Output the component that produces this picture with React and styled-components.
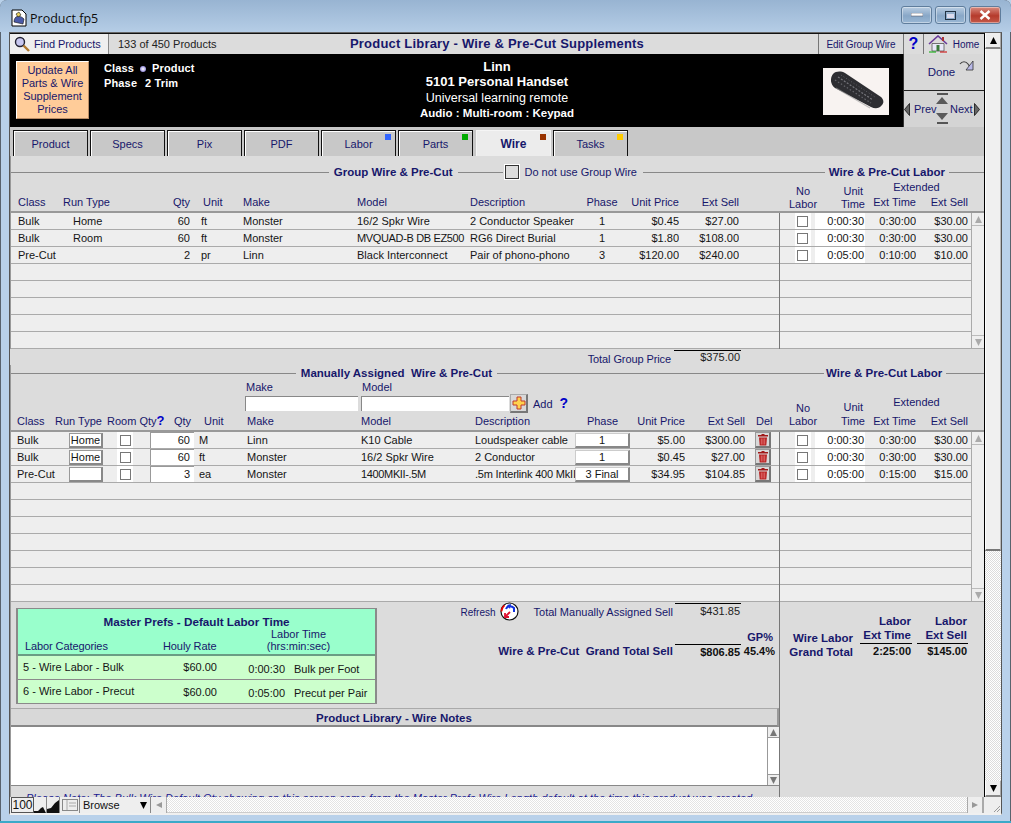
import React from 'react';
import styled, { createGlobalStyle } from 'styled-components';

const Global = createGlobalStyle`
  html, body { margin: 0; padding: 0; background: #b9d1ea; }
  * { box-sizing: border-box; }
  body { font-family: "Liberation Sans", Arial, sans-serif; font-size: 11px; }
`;

const NAVY = '#17176b';
const INK = '#151515';

const Page = styled.div`
  width: 1011px; height: 823px; overflow: hidden; display: flex; flex-direction: column;
  background: #b9d1ea; border-radius: 7px 7px 0 0; border-bottom: 2px solid #3aa9c8;
  box-shadow: inset 1px 1px 0 #59636e, inset -1px 0 0 #59636e;
`;
const TitleBar = styled.div`
  height: 32px; flex: none; display: flex; align-items: center; padding: 4px 10px 0 11px;
  background: linear-gradient(#98b4d2, #b5cde6);
`;
const TitleText = styled.span`
  margin-left: 3px; font: 12.5px "Open Sans", sans-serif; color: #0c0c0c; flex: 1;
`;
const WinButtons = styled.div` display: flex; gap: 3px; margin-top: -6px; `;
const WinBtn = styled.div`
  width: ${p => p.$w}px; height: 18px; border: 1px solid #5f7d9c; border-radius: 3px; display: flex;
  align-items: center; justify-content: center;
  background: ${p => p.$close ? 'linear-gradient(#d98c80, #b53a2c 55%, #c45a4a)' : 'linear-gradient(#b9cde2, #88a7c7 55%, #9ab7d4)'};
  box-shadow: inset 0 0 0 1px rgba(255,255,255,.4);
`;
const Client = styled.div`
  margin: 0 9px; height: 783px; flex: none; display: flex; flex-direction: column;
  border: 1px solid #555; border-bottom: 2px solid #f0f0f0; border-top-color: #666;
`;
const Upper = styled.div` height: 764px; display: flex; flex: none; `;
const Content = styled.div`
  width: 975px; flex: none; display: flex; flex-direction: column; background: #dcdcdc;
  border-right: 1px solid #000; overflow: hidden;
`;

const Toolbar = styled.div`
  height: 21px; flex: none; display: flex; background: #dcdcdc; border-top: 1px solid #111;
`;
const FindBtn = styled.div`
  width: 99px; display: flex; align-items: center; gap: 4px; padding-left: 4px; background: #efefef;
  border-right: 1px solid #888; color: ${NAVY}; letter-spacing: -.1px;
`;
const Count = styled.div`
  width: 109px; padding-left: 9px; display: flex; align-items: center; color: #222;
`;
const PageTitle = styled.div`
  flex: 1; padding-right: 42px; text-align: center; line-height: 20px; font-size: 13px; letter-spacing: .2px; font-weight: bold; color: ${NAVY};
  white-space: nowrap;
`;
const ToolBtn = styled.div`
  width: ${p => p.$w}px; display: flex; align-items: center; justify-content: center; gap: 5px; flex: none;
  border-left: 1px solid #777; font-size: 10px; letter-spacing: ${p => p.$tight ? '-.15px' : '0'}; color: ${NAVY};
`;
const ToolEnd = styled.div` width: 1px; flex: none; background: #dcdcdc; `;

const HeaderBand = styled.div` height: 73px; flex: none; display: flex; background: #000; `;
const HeaderMain = styled.div` width: 893px; display: grid; grid-template-columns: 250px 474px 169px; `;
const HeaderLeft = styled.div` display: flex; padding: 7px 0 0 6px; gap: 15px; `;
const UpdateBtn = styled.div`
  width: 73px; height: 58px; display: flex; align-items: center; justify-content: center; text-align: center;
  background: #ffcc99; border: 1px solid #fff; border-right-color: #b98c66; border-bottom-color: #b98c66;
  color: ${NAVY}; line-height: 13px;
`;
const MetaGrid = styled.div`
  display: grid; grid-template-columns: 36px 12px auto; grid-auto-rows: 15px; align-content: start; color: #fff; font-weight: bold;
  font-size: 11px; line-height: 15px; letter-spacing: .15px;
`;
const MetaBullet = styled.span`
  width: 6px; height: 6px; border-radius: 50%; background: radial-gradient(#fff, #6a5fd0); align-self: center;
`;
const MetaPhase = styled.span` margin-left: -7px; `;
const HeaderCenter = styled.div`
  padding-top: 6px; text-align: center; color: #fff;
`;
const HeadLine = styled.div`
  height: ${p => p.$h}px; line-height: ${p => p.$h}px; font-weight: ${p => p.$bold ? 'bold' : 'normal'}; font-size: ${p => p.$size}px;
`;
const PhotoCell = styled.div` padding: 14px 0 0 89px; `;
const Photo = styled.svg` display: block; `;
const NavCol = styled.div` width: 81px; flex: none; display: flex; flex-direction: column; background: #d4d4d4; border-left: 1px solid #333; `;
const DoneBtn = styled.div`
  height: 37px; display: flex; align-items: center; justify-content: center; gap: 4px; padding-left: 14px; color: ${NAVY}; font-size: 11.5px;
  border-bottom: 1px solid #222; background: #d8d8d8;
`;
const DoneGlyph = styled.svg` margin-top: -12px; `;
const PrevNext = styled.div` height: 36px; display: flex; align-items: center; color: ${NAVY}; white-space: nowrap; `;
const PrevLabel = styled.span` margin-left: 4px; width: 20px; `;
const NextLabel = styled.span` width: 22px; margin-right: 2px; `;
const UpDown = styled.div` width: 16px; height: 34px; display: flex; flex-direction: column; justify-content: space-between; align-items: center; padding: 1px 0 2px; `;
const ArrowBar = styled.i` display: block; width: 11px; height: 2px; background: #555; `;
const ArrowGroup = styled.div` display: flex; flex-direction: column; align-items: center; gap: 2px; `;

const TabStrip = styled.div`
  height: 29px; flex: none; display: flex; gap: 2px; padding: 3px 0 0 3px; background: #c8c8c8;
`;
const Tab = styled.div`
  position: relative; width: 75px; height: 26px; text-align: center; line-height: 27px; color: ${NAVY};
  background: ${p => p.$active ? '#ececec' : '#c8c8c8'}; font-weight: ${p => p.$active ? 'bold' : 'normal'};
  font-size: ${p => p.$active ? 12 : 11}px; margin-left: ${p => p.$active ? 1 : 0}px;
  border: 1px solid ${p => p.$active ? '#f5f5f5' : '#111'}; border-bottom: 0;
  box-shadow: ${p => p.$active ? 'none' : 'inset 1px 1px 0 #fff'};
`;
const TabDot = styled.i`
  position: absolute; top: 3px; right: 4px; width: 6px; height: 6px; background: ${p => p.$c};
`;

const Section = styled.div`
  display: grid; grid-template-columns: 769px 204px; flex: none; padding-left: 1px; box-shadow: inset 1px 0 0 #999;
`;
const LeftCol = styled.div` min-width: 0; `;
const RightCol = styled.div` min-width: 0; `;
const HeadBlock = styled.div`
  height: ${p => p.$h}px; padding-top: ${p => p.$top}px; border-bottom: 2px solid #999; display: flex; flex-direction: column;
`;
const HeadingRow = styled.div`
  height: 16px; flex: none; display: flex; align-items: center; color: ${NAVY}; white-space: nowrap;
`;
const Rule = styled.div`
  height: 1px; background: #888; flex: ${p => p.$w ? `0 0 ${p.$w}px` : 1}; margin-left: ${p => p.$ml || 0}px;
`;
const Heading = styled.span`
  font-weight: bold; font-size: 11.5px; padding: 0 ${p => p.$pad ?? 5}px; color: ${NAVY};
`;
const CheckWrap = styled.div`
  width: 14px; height: 14px; flex: none; border: 1px solid #333; box-shadow: 0 0 0 1px #fff; margin: 0 6px 0 2px; background: #dcdcdc;
`;
const ColHead = styled.div`
  display: grid; grid-template-columns: ${p => p.$cols}; padding-left: ${p => p.$pl}px; height: ${p => p.$h}px; align-items: end;
  padding-bottom: ${p => p.$pb}px; color: ${NAVY}; line-height: 13px;
`;
const HCell = styled.div`
  padding-left: ${p => p.$pl || 0}px; white-space: nowrap; display: flex;
  justify-content: ${p => p.$a === 'right' ? 'flex-end' : p.$a === 'center' ? 'center' : 'flex-start'};
`;
const Rows = styled.div` border-right: ${p => p.$line ? '1px solid #777' : '0'}; `;
const Row = styled.div`
  height: 17px; display: grid; grid-template-columns: ${p => p.$cols}; padding-left: ${p => p.$pl}px; align-items: center;
  background: #eeeeee; border-bottom: 1px solid #aaa; color: ${INK}; white-space: nowrap;
`;
const Cell = styled.div`
  text-align: ${p => p.$a || 'left'}; padding-left: ${p => p.$pl || 0}px; overflow: hidden;
  letter-spacing: ${p => p.$sp || 0}px;
`;
const WhiteCell = styled.div`
  height: 16px; background: #fff; line-height: 16px; padding-right: 1px; display: flex; align-items: center;
  justify-content: ${p => p.$center ? 'center' : 'flex-end'};
`;
const RoomCell = styled(WhiteCell)` width: 16px; margin-left: 13px; padding-right: 0; `;
const Box = styled.div` width: 11px; height: 11px; border: 1px solid #777; background: #fff; `;
const QtyInput = styled.div`
  height: 16px; background: #fff; border-left: 1px solid #999; border-top: 1px solid #999; text-align: right; padding-right: 4px; line-height: 14px;
`;
const RunBtn = styled.div`
  height: 15px; width: 34px; background: #fff; border: 1px solid #999; border-right: 2px solid #888; border-bottom: 2px solid #888; text-align: center; line-height: 12px;
`;
const PhaseBtn = styled.div`
  height: 15px; width: 55px; background: #fff; border: 1px solid #ccc; border-right: 2px solid #888; border-bottom: 2px solid #888; text-align: center; line-height: 12px;
`;
const DelBtn = styled.div`
  width: 16px; height: 16px; background: #d8d8d8; border: 1px solid #999; border-right: 2px solid #777; border-bottom: 2px solid #777;
  display: flex; align-items: center; justify-content: center;
`;
const LaborWrap = styled.div` display: flex; `;
const LaborRows = styled.div` width: 191px; flex: none; `;
const VScrollMini = styled.div`
  width: 13px; flex: none; background: #eee; border-left: 1px solid #aaa; display: flex; flex-direction: column; justify-content: space-between;
  border-bottom: 1px solid #aaa;
`;
const MiniBtn = styled.div`
  height: 13px; display: flex; align-items: center; justify-content: center; border-${p => p.$side}: 1px solid #bbb;
`;
const TotalRow = styled.div`
  height: 16px; flex: none; display: flex; justify-content: flex-end; padding-right: 243px; color: ${NAVY};
`;
const TotalLabel = styled.div` padding-top: 4px; line-height: 13px; margin-right: 3px; letter-spacing: -.1px; `;
const TotalValue = styled.div`
  width: 67px; height: 14px; margin-top: 1px; border-top: 1px solid #000; text-align: right; padding-right: 1px; line-height: 13px; color: #222;
`;
const LaborHead = styled.div`
  height: ${p => p.$h}px; display: grid; grid-template-columns: 46px 39px 103px; align-items: end; color: ${NAVY}; line-height: 13px; text-align: center;
`;
const NoLabor = styled.div` padding-bottom: ${p => p.$pb}px; `;
const UnitTime = styled.div` text-align: right; padding-bottom: ${p => p.$pb}px; white-space: nowrap; `;
const UnitWord = styled.div` padding-right: 2px; margin-bottom: ${p => p.$mb || 0}px; `;
const Extended = styled.div` padding-bottom: ${p => p.$pb}px; `;
const ExtTitle = styled.div` margin-bottom: ${p => p.$mb}px; `;
const ExtCols = styled.div` display: grid; grid-template-columns: 51px 52px; text-align: right; `;
const FilterRow = styled.div` height: 33px; flex: none; display: flex; align-items: flex-start; padding-left: 234px; color: ${NAVY}; line-height: 13px; `;
const FilterField = styled.div` width: ${p => p.$w}px; margin-right: ${p => p.$mr}px; flex: none; `;
const FilterLabel = styled.div` padding-left: 1px; height: 15px; `;
const FilterInput = styled.div`
  height: 15px; background: #fff; border-left: 1px solid #888; border-top: 1px solid #888;
`;
const AddBtn = styled.div`
  width: 18px; height: 19px; margin-top: 13px; background: #d8d8d8; border: 1px solid #aaa; border-right: 2px solid #777; border-bottom: 2px solid #777;
  display: flex; align-items: center; justify-content: center; flex: none;
`;
const AddLabel = styled.div` margin: 17px 7px 0 5px; `;
const Q = styled.span`
  font: bold ${p => p.$s || 14}px/12px "Liberation Sans", sans-serif; color: #0000c8; margin-top: ${p => p.$mt || 0}px;
`;

const Bottom = styled.div` height: 195px; flex: none; display: grid; grid-template-columns: 769px 204px; padding-left: 1px; box-shadow: inset 1px 0 0 #999; `;
const BottomLeft = styled.div` border-right: 1px solid #777; display: flex; flex-direction: column; min-width: 0; `;
const SummaryArea = styled.div` height: 106px; flex: none; display: flex; padding: 6px 0 0 5px; `;
const Master = styled.div`
  width: 361px; height: 96px; flex: none; border: 2px solid #8a8a8a; border-width: 1px 2px 1px 2px; background: #ccffcc; color: ${INK};
`;
const MasterHead = styled.div` height: 47px; background: #99ffcc; border-bottom: 2px solid #6a9d84; color: ${NAVY}; `;
const MasterTitle = styled.div` text-align: center; font-weight: bold; font-size: 11.7px; height: 19px; line-height: 25px; `;
const MasterCols = styled.div` display: grid; grid-template-columns: 145px 52px 1fr; align-items: end; line-height: 12px; `;
const MasterCat = styled.div` padding-left: 7px; letter-spacing: -.1px; `;
const MasterRateHead = styled.div` text-align: right; white-space: nowrap; letter-spacing: -.1px; `;
const MasterTimeHead = styled.div` text-align: center; padding-left: 7px; `;
const MasterRow = styled.div`
  height: 24px; display: grid; grid-template-columns: 147px 52px 68px 1fr; align-items: center; border-bottom: 1px solid #8a8a8a; white-space: nowrap;
  &:last-child { border-bottom: 0; }
`;
const MName = styled.div` padding: 0 0 2px 5px; `;
const MRate = styled.div` text-align: right; padding-bottom: 1px; `;
const MTime = styled.div` text-align: right; padding-top: 2px; `;
const MDesc = styled.div` padding: 2px 0 0 9px; `;
const Summary = styled.div`
  width: 402px; flex: none; margin-top: -5px; display: grid; grid-template-columns: 1fr 66px 38px; grid-template-rows: 27px 14px 20px;
  align-content: start; color: ${NAVY};
`;
const SumLabel = styled.div`
  display: flex; justify-content: flex-end; align-items: flex-start; padding: ${p => p.$pt}px 2px 0 0; font-weight: ${p => p.$bold ? 'bold' : 'normal'};
  font-size: ${p => p.$bold ? 11.5 : 11}px; line-height: 13px; white-space: nowrap;
`;
const RefreshText = styled.span` font-size: 10px; margin-right: 4px; `;
const RefreshIcon = styled.svg` margin: -4px 15px 0 0; flex: none; `;
const SumValue = styled.div`
  border-top: ${p => p.$line ? '1px solid #000' : '0'}; text-align: right; padding: 1px 1px 0 0; line-height: 13px;
  font-weight: ${p => p.$bold ? 'bold' : 'normal'}; color: ${p => p.$bold ? '#111' : '#222'};
`;
const GpCell = styled.div`
  text-align: right; padding-right: ${p => p.$pr}px; padding-top: 1px; line-height: 13px; font-weight: bold; color: ${p => p.$c};
`;
const NotesTitle = styled.div`
  height: 19px; flex: none; text-align: center; line-height: 18px; font-weight: bold; font-size: 11.5px; color: ${NAVY}; background: #d8d8d8;
  border-top: 1px solid #aaa; border-bottom: 2px solid #888; border-right: 2px solid #999;
`;
const NotesBody = styled.div` height: 59px; flex: none; background: #fff; border-bottom: 1px solid #888; display: flex; justify-content: flex-end; `;
const NotesBar = styled.div`
  width: 12px; background: #fff; border-left: 1px solid #999; display: flex; flex-direction: column; justify-content: space-between;
`;
const NotesBtn = styled.div`
  height: 11px; background: #eee; display: flex; align-items: center; justify-content: center; border-${p => p.$side}: 1px solid #999;
`;
const Clip = styled.div`
  height: 11px; flex: none; overflow: hidden; padding: 6px 0 0 15px; line-height: 13px; font-style: italic; color: #1a1a90; white-space: nowrap; letter-spacing: .03px;
`;
const BottomRight = styled.div`
  display: grid; grid-template-columns: 73px 59px 56px; grid-template-rows: 30px 15px; padding-top: 12px; align-content: start; color: ${NAVY};
  font-weight: bold; font-size: 11.5px; line-height: 14px; text-align: right;
`;
const WireGT = styled.div` grid-row: 1 / span 2; align-self: end; white-space: nowrap; `;
const BRHead = styled.div` margin-left: ${p => p.$ml}px; border-bottom: 1px solid #000; padding-right: 1px; white-space: nowrap; `;
const BRVal = styled.div` margin-left: ${p => p.$ml}px; color: #111; line-height: 15px; padding-right: 1px; font-size: 11px; `;

const VBar = styled.div` width: 16px; flex: none; display: flex; flex-direction: column; background: repeating-conic-gradient(#fff 0 25%, #dcdcdc 0 50%) 0 0 / 2px 2px; `;
const VBtn = styled.div`
  height: 16px; flex: none; background: #eee; display: flex; align-items: center; justify-content: center; border-bottom: 2px solid #888; border-right: 1px solid #aaa; border-left: 1px solid #fff;
`;
const VThumb = styled.div`
  height: 502px; flex: none; background: #f0f0f0; border-left: 1px solid #fff; border-right: 1px solid #bbb; border-bottom: 2px solid #777;
`;
const VSpace = styled.div` flex: 1; `;
const Status = styled.div` height: 16px; flex: none; display: flex; background: #eee; color: #111; `;
const ZoomNum = styled.div` width: 23px; margin-left: 1px; border: 1px solid #555; font-size: 12px; line-height: 15px; text-align: center; background: #eee; `;
const ZoomBtn = styled.div` width: 13px; display: flex; align-items: flex-end; justify-content: center; border-right: 1px solid #888; `;
const LayoutBtn = styled.div` width: 20px; display: flex; align-items: center; justify-content: center; border-right: 1px solid #888; `;
const ModeSel = styled.div` width: 71px; display: flex; align-items: center; justify-content: space-between; padding: 0 3px 0 3px; border-right: 1px solid #888; font-size: 11px; `;
const HArrow = styled.div` width: 16px; display: flex; align-items: center; justify-content: center; background: #eee; border-right: 1px solid #aaa; border-left: ${p => p.$left ? '1px solid #aaa' : '0'}; `;
const HTrack = styled.div` flex: 1; background: repeating-conic-gradient(#fff 0 25%, #e4e4e4 0 50%) 0 0 / 2px 2px; border-bottom: 1px solid #ccc; `;
const Grip = styled.div` width: 18px; display: flex; align-items: flex-end; justify-content: flex-end; border-left: 1px solid #aaa; `;

const Tri = ({ dir = 'up', s = 7, c = '#999' }) => {
  const pts = { up: `0,${s} ${s},${s} ${s / 2},0`, down: `0,0 ${s},0 ${s / 2},${s}`, left: `${s},0 ${s},${s} 0,${s / 2}`, right: `0,0 0,${s} ${s},${s / 2}` }[dir];
  return <svg width={s} height={s} viewBox={`0 0 ${s} ${s}`}><polygon points={pts} fill={c} /></svg>;
};
const FlatTri = ({ up }) => (
  <svg width="12" height="7" viewBox="0 0 12 7"><polygon points={up ? '0,7 12,7 6,0' : '0,0 12,0 6,7'} fill="#5a5a5a" /></svg>
);
const SideTri = ({ left }) => (
  <svg width="6" height="13" viewBox="0 0 6 13"><polygon points={left ? '5.500,.5 5.500,12.500 .5,6.500' : '.5,.5 .5,12.500 5.500,6.500'} fill="#666" stroke="#111" strokeWidth=".8" /></svg>
);
const Trash = () => (
  <svg width="12" height="13" viewBox="0 0 12 13"><path d="M4.500 1h3v1H11v1.600H1V2h3.500z" fill="#a01818" /><path d="M2 4.500h8l-.7 8H2.700z" fill="#b82020" /><path d="M4.300 5.500v6M6 5.500v6M7.700 5.500v6" stroke="#e88" strokeWidth=".7" /></svg>
);
const Plus = () => (
  <svg width="14" height="14" viewBox="0 0 14 14"><path d="M5 1h4v4h4v4H9v4H5V9H1V5h4z" fill="#ffd24d" stroke="#c0392b" strokeWidth="1" /></svg>
);
const Magnifier = () => (
  <svg width="16" height="16" viewBox="0 0 16 16"><circle cx="6" cy="6" r="4.500" fill="#c8c8f0" stroke="#223" strokeWidth="1.400" /><path d="M9.500 9.500L15 15" stroke="#b07a30" strokeWidth="2.400" /></svg>
);
const House = () => (
  <svg width="20" height="18" viewBox="0 0 20 18"><path d="M1 9L10 1l9 8" fill="none" stroke="#6a3a9a" strokeWidth="1.600" /><path d="M4 8.500h12V16H4z" fill="#e8e8f8" stroke="#555" strokeWidth=".8" /><path d="M8.500 10h3v6h-3z" fill="#3a7a3a" /><path d="M1 17h7" stroke="#0a0" /><path d="M12 17h7" stroke="#c00" /><path d="M14 2h2v4h-2z" fill="#a33" /></svg>
);
const DocIcon = () => (
  <svg width="16" height="18" viewBox="0 0 16 18"><path d="M1 1h10l4 4v12H1z" fill="#fff" stroke="#000" /><path d="M3 13c0-6 5-8 10-3l-1 5z" fill="#4a5aa8" stroke="#111" strokeWidth=".6" /><path d="M5 5l3-2 2 3-3 2z" fill="#e8d060" stroke="#111" strokeWidth=".6" /></svg>
);
const DoneIcon = () => (
  <DoneGlyph width="15" height="12" viewBox="0 0 15 12"><path d="M1 4c2-3 6-3 8 0l2 3" fill="none" stroke="#444" strokeWidth="1.200" /><path d="M14 1v9H7z" fill="#b8b8e8" stroke="#333" strokeWidth=".8" /></DoneGlyph>
);
const Remote = () => (
  <Photo width="66" height="47" viewBox="0 0 66 47">
    <rect width="66" height="47" fill="#f8f3f1" />
    <path d="M10 6c3-3 8-3 12-1l36 24c3 3 3 6 1 8-3 4-7 4-11 2L12 20C7 16 7 10 10 6z" fill="#2e2e32" />
    <path d="M15 9l35 23" stroke="#77777d" strokeWidth="1.200" strokeDasharray="2 1.500" />
    <path d="M12 12l36 23" stroke="#66666c" strokeWidth="1.200" strokeDasharray="1.500 2" />
    <path d="M18 7l34 22" stroke="#5c5c62" strokeWidth="1" strokeDasharray="1 2" />
    <path d="M13 20l34 20" stroke="#9a9a9a" strokeWidth="1.200" opacity=".6" />
  </Photo>
);
const Refresh = () => (
  <RefreshIcon width="19" height="19" viewBox="0 0 19 19">
    <circle cx="9.500" cy="9.500" r="8.500" fill="#fff" stroke="#111" strokeWidth="1.200" />
    <path d="M1.500 9.500a8 8 0 0 1 3-6.200" fill="none" stroke="#e00" strokeWidth="1.600" />
    <path d="M6 7c1-3 5-4 8-1v4" fill="none" stroke="#1030e0" strokeWidth="2" />
    <path d="M7 3L11 2 10 7z" fill="#1030e0" />
    <path d="M5 15l5-5M5 11v4h4" fill="none" stroke="#e01030" strokeWidth="1.800" />
  </RefreshIcon>
);

const G_COLS = '45px 97px 30px 53px 114px 113px 117px 30px 62px 60px';
const M_COLS = '52px 35px 46px 44px 53px 114px 114px 100px 55px 55px 60px 10px 16px';
const MH_COLS = '38px 52px 58px 26px 56px 114px 114px 100px 55px 55px 60px 11px 22px';
const L_COLS = '15px 16px 4px 50px 51px 52px 3px';

const groupRows = [
  ['Bulk', 'Home', '60', 'ft', 'Monster', '16/2 Spkr Wire', '2 Conductor Speaker', '1', '$0.45', '$27.00', '0:00:30', '0:30:00', '$30.00'],
  ['Bulk', 'Room', '60', 'ft', 'Monster', 'MVQUAD-B DB EZ500', 'RG6 Direct Burial', '1', '$1.80', '$108.00', '0:00:30', '0:30:00', '$30.00'],
  ['Pre-Cut', '', '2', 'pr', 'Linn', 'Black Interconnect', 'Pair of phono-phono', '3', '$120.00', '$240.00', '0:05:00', '0:10:00', '$10.00'],
];
const manualRows = [
  ['Bulk', 'Home', '60', 'M', 'Linn', 'K10 Cable', 'Loudspeaker cable', '1', '$5.00', '$300.00', '0:00:30', '0:30:00', '$30.00'],
  ['Bulk', 'Home', '60', 'ft', 'Monster', '16/2 Spkr Wire', '2 Conductor', '1', '$0.45', '$27.00', '0:00:30', '0:30:00', '$30.00'],
  ['Pre-Cut', '', '3', 'ea', 'Monster', '1400MKII-.5M', '.5m Interlink 400 MkII', '3 Final', '$34.95', '$104.85', '0:05:00', '0:15:00', '$15.00'],
];
const tightness = s => (/^[A-Z0-9-. ]{8,}$/.test(s) ? -0.35 : s.length > 20 ? -0.2 : 0);

const LaborRow = ({ d }) => (
  <Row $cols={L_COLS} $pl={0}>
    <span />
    <WhiteCell $center><Box /></WhiteCell>
    <span />
    <WhiteCell>{d[10]}</WhiteCell>
    <Cell $a="right">{d[11]}</Cell>
    <Cell $a="right">{d[12]}</Cell>
    <span />
  </Row>
);
const LaborBlank = () => <Row $cols="1fr" $pl={0} />;
const MiniScroll = () => (
  <VScrollMini>
    <MiniBtn $side="bottom"><Tri dir="up" s={7} c="#aaa" /></MiniBtn>
    <MiniBtn $side="top"><Tri dir="down" s={7} c="#aaa" /></MiniBtn>
  </VScrollMini>
);
const blanks = n => Array.from({ length: n }, (_, i) => i);

export default function App() {
  return (
    <Page>
      <Global />
      <TitleBar>
        <DocIcon />
        <TitleText>Product.fp5</TitleText>
        <WinButtons>
          <WinBtn $w={31}><svg width="12" height="4"><rect width="12" height="3" fill="#fff" stroke="#445" strokeWidth=".5" /></svg></WinBtn>
          <WinBtn $w={31}><svg width="11" height="9"><rect x=".5" y=".5" width="10" height="8" fill="none" stroke="#234" /><rect x="2" y="3" width="7" height="4" fill="#dde" /></svg></WinBtn>
          <WinBtn $w={32} $close><svg width="12" height="10" viewBox="0 0 12 10"><path d="M1.500 1l9 8M10.500 1l-9 8" stroke="#fff" strokeWidth="2.400" /></svg></WinBtn>
        </WinButtons>
      </TitleBar>
      <Client>
        <Upper>
          <Content>
            <Toolbar>
              <FindBtn><Magnifier /><span>Find Products</span></FindBtn>
              <Count>133 of 450 Products</Count>
              <PageTitle>Product Library - Wire &amp; Pre-Cut Supplements</PageTitle>
              <ToolBtn $w={85} $tight>Edit Group Wire</ToolBtn>
              <ToolBtn $w={20}><Q $s={16}>?</Q></ToolBtn>
              <ToolBtn $w={60}><House /><span>Home</span></ToolBtn>
              <ToolEnd />
            </Toolbar>
            <HeaderBand>
              <HeaderMain>
                <HeaderLeft>
                  <UpdateBtn>Update All<br />Parts &amp; Wire<br />Supplement<br />Prices</UpdateBtn>
                  <MetaGrid>
                    <span>Class</span><MetaBullet /><span>Product</span>
                    <span>Phase</span><span /><MetaPhase>2 Trim</MetaPhase>
                  </MetaGrid>
                </HeaderLeft>
                <HeaderCenter>
                  <HeadLine $h={14} $size={13} $bold>Linn</HeadLine>
                  <HeadLine $h={16} $size={13} $bold>5101 Personal Handset</HeadLine>
                  <HeadLine $h={16} $size={12.5}>Universal learning remote</HeadLine>
                  <HeadLine $h={14} $size={11.5} $bold>Audio : Multi-room : Keypad</HeadLine>
                </HeaderCenter>
                <PhotoCell><Remote /></PhotoCell>
              </HeaderMain>
              <NavCol>
                <DoneBtn><span>Done</span><DoneIcon /></DoneBtn>
                <PrevNext>
                  <SideTri left />
                  <PrevLabel>Prev</PrevLabel>
                  <UpDown>
                    <ArrowGroup><ArrowBar /><FlatTri up /></ArrowGroup>
                    <ArrowGroup><FlatTri /><ArrowBar /></ArrowGroup>
                  </UpDown>
                  <NextLabel>Next</NextLabel>
                  <SideTri />
                </PrevNext>
              </NavCol>
            </HeaderBand>
            <TabStrip>
              <Tab>Product</Tab>
              <Tab>Specs</Tab>
              <Tab>Pix</Tab>
              <Tab>PDF</Tab>
              <Tab>Labor<TabDot $c="#3366ff" /></Tab>
              <Tab>Parts<TabDot $c="#00aa00" /></Tab>
              <Tab $active>Wire<TabDot $c="#993300" /></Tab>
              <Tab>Tasks<TabDot $c="#ffcc00" /></Tab>
            </TabStrip>

            <Section>
              <LeftCol>
                <HeadBlock $h={57} $top={8}>
                  <HeadingRow>
                    <Rule />
                    <Heading>Group Wire &amp; Pre-Cut</Heading>
                    <Rule $w={45} />
                    <CheckWrap />
                    <span>Do not use Group Wire</span>
                    <Rule $w={137} $ml={6} />
                  </HeadingRow>
                  <ColHead $cols={G_COLS} $pl={7} $h={31} $pb={2}>
                    <HCell>Class</HCell>
                    <HCell>Run Type</HCell>
                    <HCell $a="right">Qty</HCell>
                    <HCell $pl={13}>Unit</HCell>
                    <HCell>Make</HCell>
                    <HCell>Model</HCell>
                    <HCell>Description</HCell>
                    <HCell $a="center">Phase</HCell>
                    <HCell $a="right">Unit Price</HCell>
                    <HCell $a="right">Ext Sell</HCell>
                  </ColHead>
                </HeadBlock>
                <Rows $line>
                  {groupRows.map((d, i) => (
                    <Row key={i} $cols={G_COLS} $pl={7}>
                      <Cell>{d[0]}</Cell>
                      <Cell $pl={10}>{d[1]}</Cell>
                      <Cell $a="right">{d[2]}</Cell>
                      <Cell $pl={11}>{d[3]}</Cell>
                      <Cell>{d[4]}</Cell>
                      <Cell $sp={tightness(d[5])}>{d[5]}</Cell>
                      <Cell>{d[6]}</Cell>
                      <Cell $a="center">{d[7]}</Cell>
                      <Cell $a="right">{d[8]}</Cell>
                      <Cell $a="right">{d[9]}</Cell>
                    </Row>
                  ))}
                  {blanks(5).map(i => <Row key={i} $cols="1fr" $pl={0} />)}
                </Rows>
              </LeftCol>
              <RightCol>
                <HeadBlock $h={57} $top={8}>
                  <HeadingRow>
                    <Rule />
                    <Heading $pad={4}>Wire &amp; Pre-Cut Labor</Heading>
                    <Rule $w={35} />
                  </HeadingRow>
                  <LaborHead $h={31}>
                    <NoLabor $pb={0}>No<br />Labor</NoLabor>
                    <UnitTime $pb={0}><UnitWord>Unit</UnitWord>Time</UnitTime>
                    <Extended $pb={2}>
                      <ExtTitle $mb={2}>Extended</ExtTitle>
                      <ExtCols><span>Ext Time</span><span>Ext Sell</span></ExtCols>
                    </Extended>
                  </LaborHead>
                </HeadBlock>
                <LaborWrap>
                  <LaborRows>
                    {groupRows.map((d, i) => <LaborRow key={i} d={d} />)}
                    {blanks(5).map(i => <LaborBlank key={i} />)}
                  </LaborRows>
                  <MiniScroll />
                </LaborWrap>
              </RightCol>
            </Section>

            <TotalRow>
              <TotalLabel>Total Group Price</TotalLabel>
              <TotalValue>$375.00</TotalValue>
            </TotalRow>

            <Section>
              <LeftCol>
                <HeadBlock $h={67} $top={0}>
                  <HeadingRow>
                    <Rule />
                    <Heading>Manually Assigned&nbsp; Wire &amp; Pre-Cut</Heading>
                    <Rule $w={283} />
                  </HeadingRow>
                  <FilterRow>
                    <FilterField $w={113} $mr={3}><FilterLabel>Make</FilterLabel><FilterInput /></FilterField>
                    <FilterField $w={148} $mr={1}><FilterLabel>Model</FilterLabel><FilterInput /></FilterField>
                    <AddBtn><Plus /></AddBtn>
                    <AddLabel>Add</AddLabel>
                    <Q $mt={16}>?</Q>
                  </FilterRow>
                  <ColHead $cols={MH_COLS} $pl={6} $h={16} $pb={2}>
                    <HCell>Class</HCell>
                    <HCell>Run Type</HCell>
                    <HCell>Room Qty<Q $s={13}>?</Q></HCell>
                    <HCell $a="right">Qty</HCell>
                    <HCell $pl={13}>Unit</HCell>
                    <HCell>Make</HCell>
                    <HCell>Model</HCell>
                    <HCell>Description</HCell>
                    <HCell $a="center">Phase</HCell>
                    <HCell $a="right">Unit Price</HCell>
                    <HCell $a="right">Ext Sell</HCell>
                    <span />
                    <HCell>Del</HCell>
                  </ColHead>
                </HeadBlock>
                <Rows $line>
                  {manualRows.map((d, i) => (
                    <Row key={i} $cols={M_COLS} $pl={6}>
                      <Cell>{d[0]}</Cell>
                      <RunBtn>{d[1]}</RunBtn>
                      <RoomCell $center><Box /></RoomCell>
                      <QtyInput>{d[2]}</QtyInput>
                      <Cell $pl={5}>{d[3]}</Cell>
                      <Cell>{d[4]}</Cell>
                      <Cell $sp={tightness(d[5])}>{d[5]}</Cell>
                      <Cell $sp={tightness(d[6])}>{d[6]}</Cell>
                      <PhaseBtn>{d[7]}</PhaseBtn>
                      <Cell $a="right">{d[8]}</Cell>
                      <Cell $a="right">{d[9]}</Cell>
                      <span />
                      <DelBtn><Trash /></DelBtn>
                    </Row>
                  ))}
                  {blanks(7).map(i => <Row key={i} $cols="1fr" $pl={0} />)}
                </Rows>
              </LeftCol>
              <RightCol>
                <HeadBlock $h={67} $top={0}>
                  <HeadingRow>
                    <Rule $w={44} />
                    <Heading $pad={2}>Wire &amp; Pre-Cut Labor</Heading>
                    <Rule $ml={2} />
                  </HeadingRow>
                  <LaborHead $h={49}>
                    <NoLabor $pb={2}>No<br />Labor</NoLabor>
                    <UnitTime $pb={2}><UnitWord $mb={1}>Unit</UnitWord>Time</UnitTime>
                    <Extended $pb={2}>
                      <ExtTitle $mb={6}>Extended</ExtTitle>
                      <ExtCols><span>Ext Time</span><span>Ext Sell</span></ExtCols>
                    </Extended>
                  </LaborHead>
                </HeadBlock>
                <LaborWrap>
                  <LaborRows>
                    {manualRows.map((d, i) => <LaborRow key={i} d={d} />)}
                    {blanks(7).map(i => <LaborBlank key={i} />)}
                  </LaborRows>
                  <MiniScroll />
                </LaborWrap>
              </RightCol>
            </Section>

            <Bottom>
              <BottomLeft>
                <SummaryArea>
                  <Master>
                    <MasterHead>
                      <MasterTitle>Master Prefs - Default Labor Time</MasterTitle>
                      <MasterCols>
                        <MasterCat>Labor Categories</MasterCat>
                        <MasterRateHead>Houly Rate</MasterRateHead>
                        <MasterTimeHead>Labor Time<br />(hrs:min:sec)</MasterTimeHead>
                      </MasterCols>
                    </MasterHead>
                    <MasterRow>
                      <MName>5 - Wire Labor - Bulk</MName><MRate>$60.00</MRate><MTime>0:00:30</MTime><MDesc>Bulk per Foot</MDesc>
                    </MasterRow>
                    <MasterRow>
                      <MName>6 - Wire Labor - Precut</MName><MRate>$60.00</MRate><MTime>0:05:00</MTime><MDesc>Precut per Pair</MDesc>
                    </MasterRow>
                  </Master>
                  <Summary>
                    <SumLabel $pt={3}><RefreshText>Refresh</RefreshText><Refresh /><span>Total Manually Assigned Sell</span></SumLabel>
                    <SumValue $line>$431.85</SumValue>
                    <span />
                    <span /><span /><GpCell $pr={6} $c={NAVY}>GP%</GpCell>
                    <SumLabel $pt={1} $bold>Wire &amp; Pre-Cut&nbsp; Grand Total Sell</SumLabel>
                    <SumValue $line $bold>$806.85</SumValue>
                    <GpCell $pr={4} $c="#111">45.4%</GpCell>
                  </Summary>
                </SummaryArea>
                <NotesTitle>Product Library - Wire Notes</NotesTitle>
                <NotesBody>
                  <NotesBar>
                    <NotesBtn $side="bottom"><Tri dir="up" s={7} c="#777" /></NotesBtn>
                    <NotesBtn $side="top"><Tri dir="down" s={7} c="#777" /></NotesBtn>
                  </NotesBar>
                </NotesBody>
                <Clip>Please Note: The Bulk Wire Default Qty showing on this screen come from the Master Prefs Wire Length default at the time this product was created.</Clip>
              </BottomLeft>
              <BottomRight>
                <WireGT>Wire Labor<br />Grand Total</WireGT>
                <BRHead $ml={7}>Labor<br />Ext Time</BRHead>
                <BRHead $ml={5}>Labor<br />Ext Sell</BRHead>
                <BRVal $ml={7}>2:25:00</BRVal>
                <BRVal $ml={5}>$145.00</BRVal>
              </BottomRight>
            </Bottom>
          </Content>
          <VBar>
            <VBtn><Tri dir="up" s={7} c="#000" /></VBtn>
            <VThumb />
            <VSpace />
            <VBtn><Tri dir="down" s={7} c="#000" /></VBtn>
          </VBar>
        </Upper>
        <Status>
          <ZoomNum>100</ZoomNum>
          <ZoomBtn><svg width="12" height="10" viewBox="0 0 12 10"><path d="M0 10V8h4l3-3 2-1 3 6z" fill="#111" /></svg></ZoomBtn>
          <ZoomBtn><svg width="12" height="13" viewBox="0 0 12 13"><path d="M0 13V9l4-1 4-5 4-3v13z" fill="#111" /></svg></ZoomBtn>
          <LayoutBtn><svg width="16" height="12" viewBox="0 0 16 12"><rect x=".5" y=".5" width="15" height="11" fill="#eee" stroke="#888" /><path d="M5 1v10M7 4h7M7 7h7" stroke="#aaa" /></svg></LayoutBtn>
          <ModeSel><span>Browse</span><Tri dir="down" s={7} c="#000" /></ModeSel>
          <HArrow><Tri dir="left" s={6} c="#999" /></HArrow>
          <HTrack />
          <HArrow $left><Tri dir="right" s={6} c="#999" /></HArrow>
          <Grip><svg width="10" height="10" viewBox="0 0 10 10"><path d="M9 3L3 9M9 6L6 9" stroke="#999" /></svg></Grip>
        </Status>
      </Client>
    </Page>
  );
}
